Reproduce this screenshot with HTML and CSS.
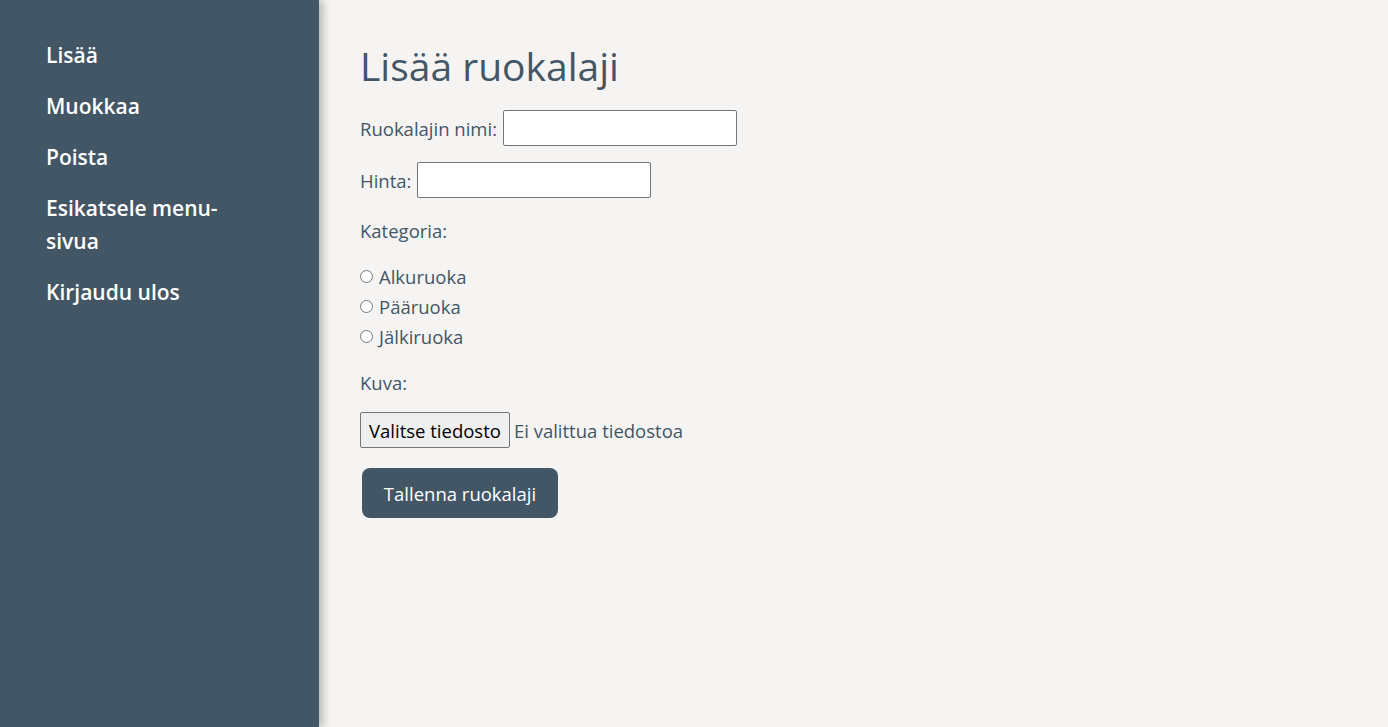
FILE: index.html
```html
<!DOCTYPE html>
<html lang="fi">
<head>
<meta charset="utf-8">
<title>Lisää ruokalaji</title>
<link rel="stylesheet" href="styles.css">
</head>
<body>
<div class="layout">
  <nav class="sidebar">
    <a class="nav-link" href="#">Lisää</a>
    <a class="nav-link" href="#">Muokkaa</a>
    <a class="nav-link" href="#">Poista</a>
    <a class="nav-link" href="#">Esikatsele menu-sivua</a>
    <a class="nav-link" href="#">Kirjaudu ulos</a>
  </nav>
  <main class="content">
    <h1 class="title">Lisää ruokalaji</h1>
    <form class="form">
      <div class="row"><label for="nimi">Ruokalajin nimi:</label> <input id="nimi" class="text-input" type="text"></div>
      <div class="row"><label for="hinta">Hinta:</label> <input id="hinta" class="text-input" type="text"></div>
      <div class="row label-only">Kategoria:</div>
      <div class="radios">
        <label class="radio"><input type="radio" name="kat"> Alkuruoka</label>
        <label class="radio"><input type="radio" name="kat"> Pääruoka</label>
        <label class="radio"><input type="radio" name="kat"> Jälkiruoka</label>
      </div>
      <div class="row label-only">Kuva:</div>
      <div class="row file-row"><span class="file-btn">Valitse tiedosto</span><span class="file-none">Ei valittua tiedostoa</span></div>
      <button class="submit" type="button">Tallenna ruokalaji</button>
    </form>
  </main>
</div>
</body>
</html>
```
FILE: styles.css
```css
* { box-sizing: border-box; }
html, body { margin: 0; height: 100%; }
body {
  font-family: "Open Sans", "Noto Sans", sans-serif;
  background: #f5f4f2;
  color: #435666;
}
.layout { display: flex; min-height: 727px; }
.sidebar {
  width: 319px;
  flex: none;
  background: #435666;
  box-shadow: 4px 0 8px rgba(0,0,0,0.25);
  padding: 39px 90px 0 46px;
  display: flex;
  flex-direction: column;
  gap: 18px;
  position: relative;
  z-index: 1;
}
.nav-link {
  color: #fff;
  text-decoration: none;
  font-weight: 600;
  font-size: 21px;
  line-height: 33px;
}
.content {
  flex: 1;
  padding: 40px 41px;
}
.title {
  font-size: 39px;
  font-weight: 500;
  margin: 0 0 18px;
  line-height: 52px;
}
.form { font-size: 18.5px; }
.row { display: flex; align-items: center; margin-bottom: 16px; }
.row label { margin-right: 6px; }
.text-input {
  width: 234px;
  height: 36px;
  border: 1px solid #767676;
  border-radius: 2px;
  background: #fff;
  font: inherit;
}
.label-only { height: 32px; margin-bottom: 15px; }
.radios { display: flex; flex-direction: column; margin-bottom: 15px; }
.radio { display: flex; align-items: center; height: 30px; }
.radio input { margin: 0 6px 0 0; width: 13px; height: 13px; }
.label-only + .file-row { margin-top: -1px; }
.file-row { margin-bottom: 20px; }
.file-btn {
  display: inline-flex;
  align-items: center;
  height: 36px;
  padding: 0 8px;
  border: 1px solid #767676;
  border-radius: 2px;
  background: #efefef;
  color: #000;
  margin-right: 4px;
}
.submit {
  margin-left: 2px;
  width: 196px;
  height: 50px;
  border: none;
  border-radius: 8px;
  background: #435666;
  color: #fff;
  font: inherit;
}
```
